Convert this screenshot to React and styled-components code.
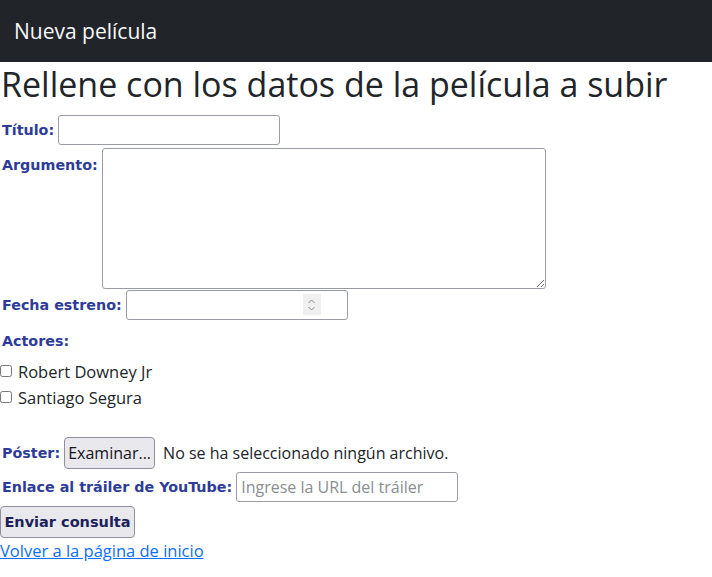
import React from 'react';
import styled, { createGlobalStyle } from 'styled-components';

const GlobalStyle = createGlobalStyle`
body {
    margin: 0;
    background: #fff;
    font-family: "Open Sans", "Noto Sans", sans-serif;
    color: #212529;
}
`

const Navbar = styled.nav `
background-color: #212529;
height: 62px;
display: flex;
align-items: center;
padding-left: 14px;
color: #f8f9fa;
font-size: 21px;
`
const Title = styled.h1 `
margin: 2px 0 11px 1px;
font-weight: 400;
font-size: 34px;
line-height: 40px;
color: #212529;
`
const Form = styled.form `
display: flex;
flex-direction: column;
align-items: flex-start;
`
const Row = styled.div `
display: flex;
align-items: ${props => props.top ? 'flex-start' : 'center'};
margin-top: ${props => props.gap || 0}px;
`
const Label = styled.label `
font-family: "DejaVu Sans", Verdana, sans-serif;
font-weight: bold;
font-size: 14.3px;
line-height: 17px;
color: #2e3c99;
padding-left: 2px;
padding-top: ${props => props.pad || 0}px;
margin-right: 4px;
`
const TextInput = styled.input `
box-sizing: border-box;
width: ${props => props.w || 222}px;
height: 30px;
border: 1px solid #9a9ca3;
border-radius: 3px;
font-family: "Open Sans", sans-serif;
font-size: 16px;
padding: 0 4px;
&::placeholder {
    color: #8a8d91;
}
`
const DateBox = styled.div `
position: relative;
`
const Spinner = styled.span `
position: absolute;
right: 27px;
top: 4px;
width: 18px;
height: 21px;
background: #efefef;
display: flex;
align-items: center;
justify-content: center;
`
const TextArea = styled.textarea `
display: block;
box-sizing: border-box;
width: 444px;
height: 141px;
border: 1px solid #9a9ca3;
border-radius: 3px;
resize: both;
`
const Check = styled.label `
display: flex;
align-items: center;
font-size: 16.5px;
height: 26px;
margin-top: ${props => props.gap || 0}px;
input {
    margin: 0 6px 0 0;
    width: 12px;
    height: 12px;
}
`
const FileButton = styled.button `
height: 32px;
width: 91px;
padding: 0;
border: 1px solid #8f8f9d;
border-radius: 4px;
background: #e9e9ed;
font-family: "Open Sans", sans-serif;
font-size: 16px;
color: #15141a;
margin-right: 8px;
`
const FileText = styled.span `
font-size: 16px;
`
const Submit = styled.button `
height: 32px;
width: 135px;
padding: 0;
border: 1px solid #8f8f9d;
border-radius: 4px;
background: #e9e9ed;
font-family: "DejaVu Sans", Verdana, sans-serif;
font-weight: bold;
font-size: 14.5px;
color: #1c1f5c;
margin-top: 4px;
`
const Link = styled.a `
color: #0d6efd;
font-size: 16.5px;
line-height: 22px;
margin-top: 2px;
text-decoration: underline;
`

export default function App(){
    return (
        <>
        <GlobalStyle />
        <Navbar>Nueva película</Navbar>
        <Title>Rellene con los datos de la película a subir</Title>
        <Form onSubmit={e => e.preventDefault()}>
            <Row>
                <Label htmlFor="titulo">Título:</Label>
                <TextInput id="titulo" type="text" />
            </Row>
            <Row top gap={3}>
                <Label htmlFor="argumento" pad={9}>Argumento:</Label>
                <TextArea id="argumento" />
            </Row>
            <Row gap={1}>
                <Label htmlFor="fecha">Fecha estreno:</Label>
                <DateBox>
                    <TextInput id="fecha" type="text" />
                    <Spinner>
                        <svg width="9" height="14" viewBox="0 0 9 14" fill="none" stroke="#8a8a8a" strokeWidth="1">
                            <path d="M1.5 5 L4.5 2 L7.5 5" />
                            <path d="M1.5 9 L4.5 12 L7.5 9" />
                        </svg>
                    </Spinner>
                </DateBox>
            </Row>
            <Row gap={13}>
                <Label>Actores:</Label>
            </Row>
            <Check gap={8}><input type="checkbox" />Robert Downey Jr</Check>
            <Check><input type="checkbox" />Santiago Segura</Check>
            <Row gap={27}>
                <Label htmlFor="poster">Póster:</Label>
                <FileButton type="button">Examinar...</FileButton>
                <FileText>No se ha seleccionado ningún archivo.</FileText>
            </Row>
            <Row gap={3}>
                <Label htmlFor="trailer">Enlace al tráiler de YouTube:</Label>
                <TextInput id="trailer" type="text" placeholder="Ingrese la URL del tráiler" />
            </Row>
            <Submit type="submit">Enviar consulta</Submit>
            <Link href="#">Volver a la página de inicio</Link>
        </Form>
        </>
    )
}
